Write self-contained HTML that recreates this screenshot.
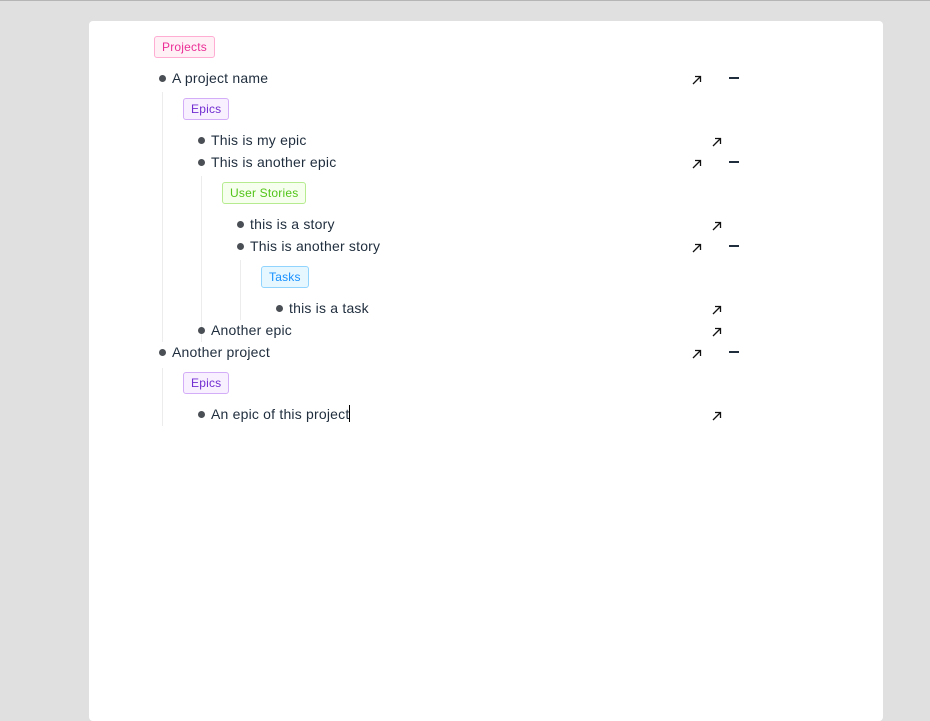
<!DOCTYPE html>
<html><head><style>
body{margin:0;width:930px;height:721px;background:#dfe0df;position:relative;overflow:hidden;font-family:"Liberation Sans",sans-serif;}
.top{position:absolute;left:0;top:0;width:930px;height:1px;background:#b5b5b5}
.card{position:absolute;left:89px;top:21px;width:794px;height:700px;background:#fff;border-radius:4px}
.t{position:absolute;font-size:14px;color:#1f2d3d;line-height:18px;white-space:nowrap;letter-spacing:0.2px}
.b{position:absolute;width:7px;height:7px;border-radius:50%;background:#4a4f55}
.tag{position:absolute;height:19px;line-height:19px;padding:0 7px;font-size:12px;border:1px solid;border-radius:3px;box-sizing:border-box;letter-spacing:0.2px}
.v{position:absolute;width:1px;background:#ececec}
.m{position:absolute;width:10px;height:2px;background:#1f2d3d}
</style></head><body>
<div class="top"></div><div class="card"></div>
<div class="tag" style="left:154px;top:36px;width:61px;height:22px;line-height:20px;color:#eb2f96;background:#fff0f6;border-color:#ffadd2">Projects</div>
<div class="tag" style="left:183px;top:98px;height:22px;line-height:20px;color:#722ed1;background:#f9f0ff;border-color:#d3adf7">Epics</div>
<div class="tag" style="left:222px;top:182px;height:22px;line-height:20px;color:#52c41a;background:#f6ffed;border-color:#b7eb8f">User Stories</div>
<div class="tag" style="left:261px;top:266px;height:22px;line-height:20px;color:#1890ff;background:#e6f7ff;border-color:#91d5ff">Tasks</div>
<div class="tag" style="left:183px;top:372px;height:22px;line-height:20px;color:#722ed1;background:#f9f0ff;border-color:#d3adf7">Epics</div>
<div class="v" style="left:162px;top:92px;height:250px"></div>
<div class="v" style="left:201px;top:176px;height:166px"></div>
<div class="v" style="left:240px;top:260px;height:60px"></div>
<div class="v" style="left:162px;top:368px;height:58px"></div>

<div class="b" style="left:159px;top:75px"></div><div class="t" style="left:172px;top:69px">A project name</div>
<div class="b" style="left:198px;top:137px"></div><div class="t" style="left:211px;top:131px">This is my epic</div>
<div class="b" style="left:198px;top:159px"></div><div class="t" style="left:211px;top:153px">This is another epic</div>
<div class="b" style="left:237px;top:221px"></div><div class="t" style="left:250px;top:215px">this is a story</div>
<div class="b" style="left:237px;top:243px"></div><div class="t" style="left:250px;top:237px">This is another story</div>
<div class="b" style="left:276px;top:305px"></div><div class="t" style="left:289px;top:299px">this is a task</div>
<div class="b" style="left:198px;top:327px"></div><div class="t" style="left:211px;top:321px">Another epic</div>
<div class="b" style="left:159px;top:349px"></div><div class="t" style="left:172px;top:343px">Another project</div>
<div class="b" style="left:198px;top:411px"></div><div class="t" style="left:211px;top:405px">An epic of this project<span style="display:inline-block;width:1px;height:17px;background:#000;vertical-align:-3px"></span></div>

<svg width="930" height="721" style="position:absolute;left:0;top:0">
<defs><g id="ar" stroke="#111" stroke-width="1.3" fill="none"><path d="M1 9L8.5 1.5M3 1.5H8.5V7"/></g></defs>
<use href="#ar" x="692" y="75"/><use href="#ar" x="712" y="137"/><use href="#ar" x="692" y="159"/>
<use href="#ar" x="712" y="221"/><use href="#ar" x="692" y="243"/><use href="#ar" x="712" y="305"/>
<use href="#ar" x="712" y="327"/><use href="#ar" x="692" y="349"/><use href="#ar" x="712" y="411"/>
</svg>
<div class="m" style="left:729px;top:77px"></div>
<div class="m" style="left:729px;top:161px"></div>
<div class="m" style="left:729px;top:245px"></div>
<div class="m" style="left:729px;top:351px"></div>
</body></html>
